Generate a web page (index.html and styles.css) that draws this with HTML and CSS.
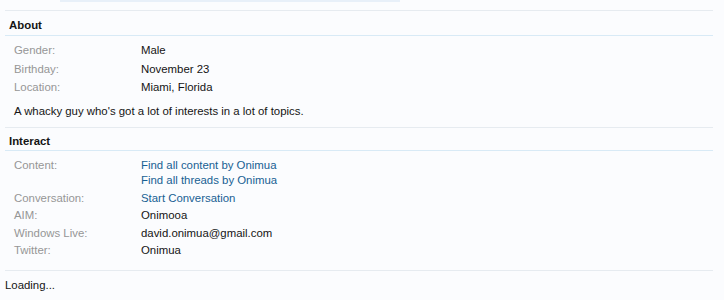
FILE: index.html
```html
<!DOCTYPE html>
<html lang="en">

<head>
    <meta charset="UTF-8">
    <title>Member Profile</title>
    <link rel="stylesheet" href="styles.css">
</head>

<body>
    <div class="page">
        <div class="tabbar"></div>

        <div class="section about-section">
            <h3>About</h3>
            <dl class="pairs">
                <div class="row"><dt>Gender:</dt><dd>Male</dd></div>
                <div class="row"><dt>Birthday:</dt><dd>November 23</dd></div>
                <div class="row"><dt>Location:</dt><dd>Miami, Florida</dd></div>
            </dl>
            <p class="about">A whacky guy who's got a lot of interests in a lot of topics.</p>
        </div>

        <div class="section interact-section">
            <h3>Interact</h3>
            <dl class="pairs">
                <div class="row">
                    <dt>Content:</dt>
                    <dd>
                        <a href="#">Find all content by Onimua</a><br>
                        <a href="#">Find all threads by Onimua</a>
                    </dd>
                </div>
                <div class="row"><dt>Conversation:</dt><dd><a href="#">Start Conversation</a></dd></div>
                <div class="row"><dt>AIM:</dt><dd>Onimooa</dd></div>
                <div class="row"><dt>Windows Live:</dt><dd>david.onimua@gmail.com</dd></div>
                <div class="row"><dt>Twitter:</dt><dd>Onimua</dd></div>
            </dl>
        </div>

        <div class="section loading">Loading...</div>
    </div>
</body>

</html>
```

FILE: styles.css
```css
body {
    margin: 0;
    background-color: #fbfcfe;
    color: #141414;
    font-family: "Liberation Sans", Arial, sans-serif;
    font-size: 11.4px;
}

.page {
    padding: 0 11px 0 5px;
}

.tabbar {
    margin-left: 55px;
    width: 340px;
    height: 2px;
    background-color: #e8f0f9;
}

.section {
    border-top: 1px solid #e6ebf0;
}

.about-section {
    margin-top: 8px;
}

h3 {
    margin: 0;
    padding: 7px 4px 2px;
    line-height: 15px;
    font-size: 11.4px;
    font-weight: bold;
    color: #141414;
    border-bottom: 1px solid #d8eaf6;
}

.interact-section h3 {
    padding: 6px 4px 1px;
}

.pairs {
    margin: 0;
    padding: 7px 0 0 9px;
}

.row {
    display: flex;
    line-height: 15px;
    margin-bottom: 3.5px;
}

.interact-section .row {
    margin-bottom: 2.5px;
}

.interact-section .pairs {
    padding-bottom: 9px;
}

dt {
    width: 127px;
    color: #969696;
}

dd {
    margin: 0;
}

a {
    color: #176093;
    text-decoration: none;
}

.about {
    margin: 9px 0 0 9px;
    padding-bottom: 8px;
    line-height: 15px;
}

.loading {
    padding: 7px 0 0;
    line-height: 15px;
}
```
